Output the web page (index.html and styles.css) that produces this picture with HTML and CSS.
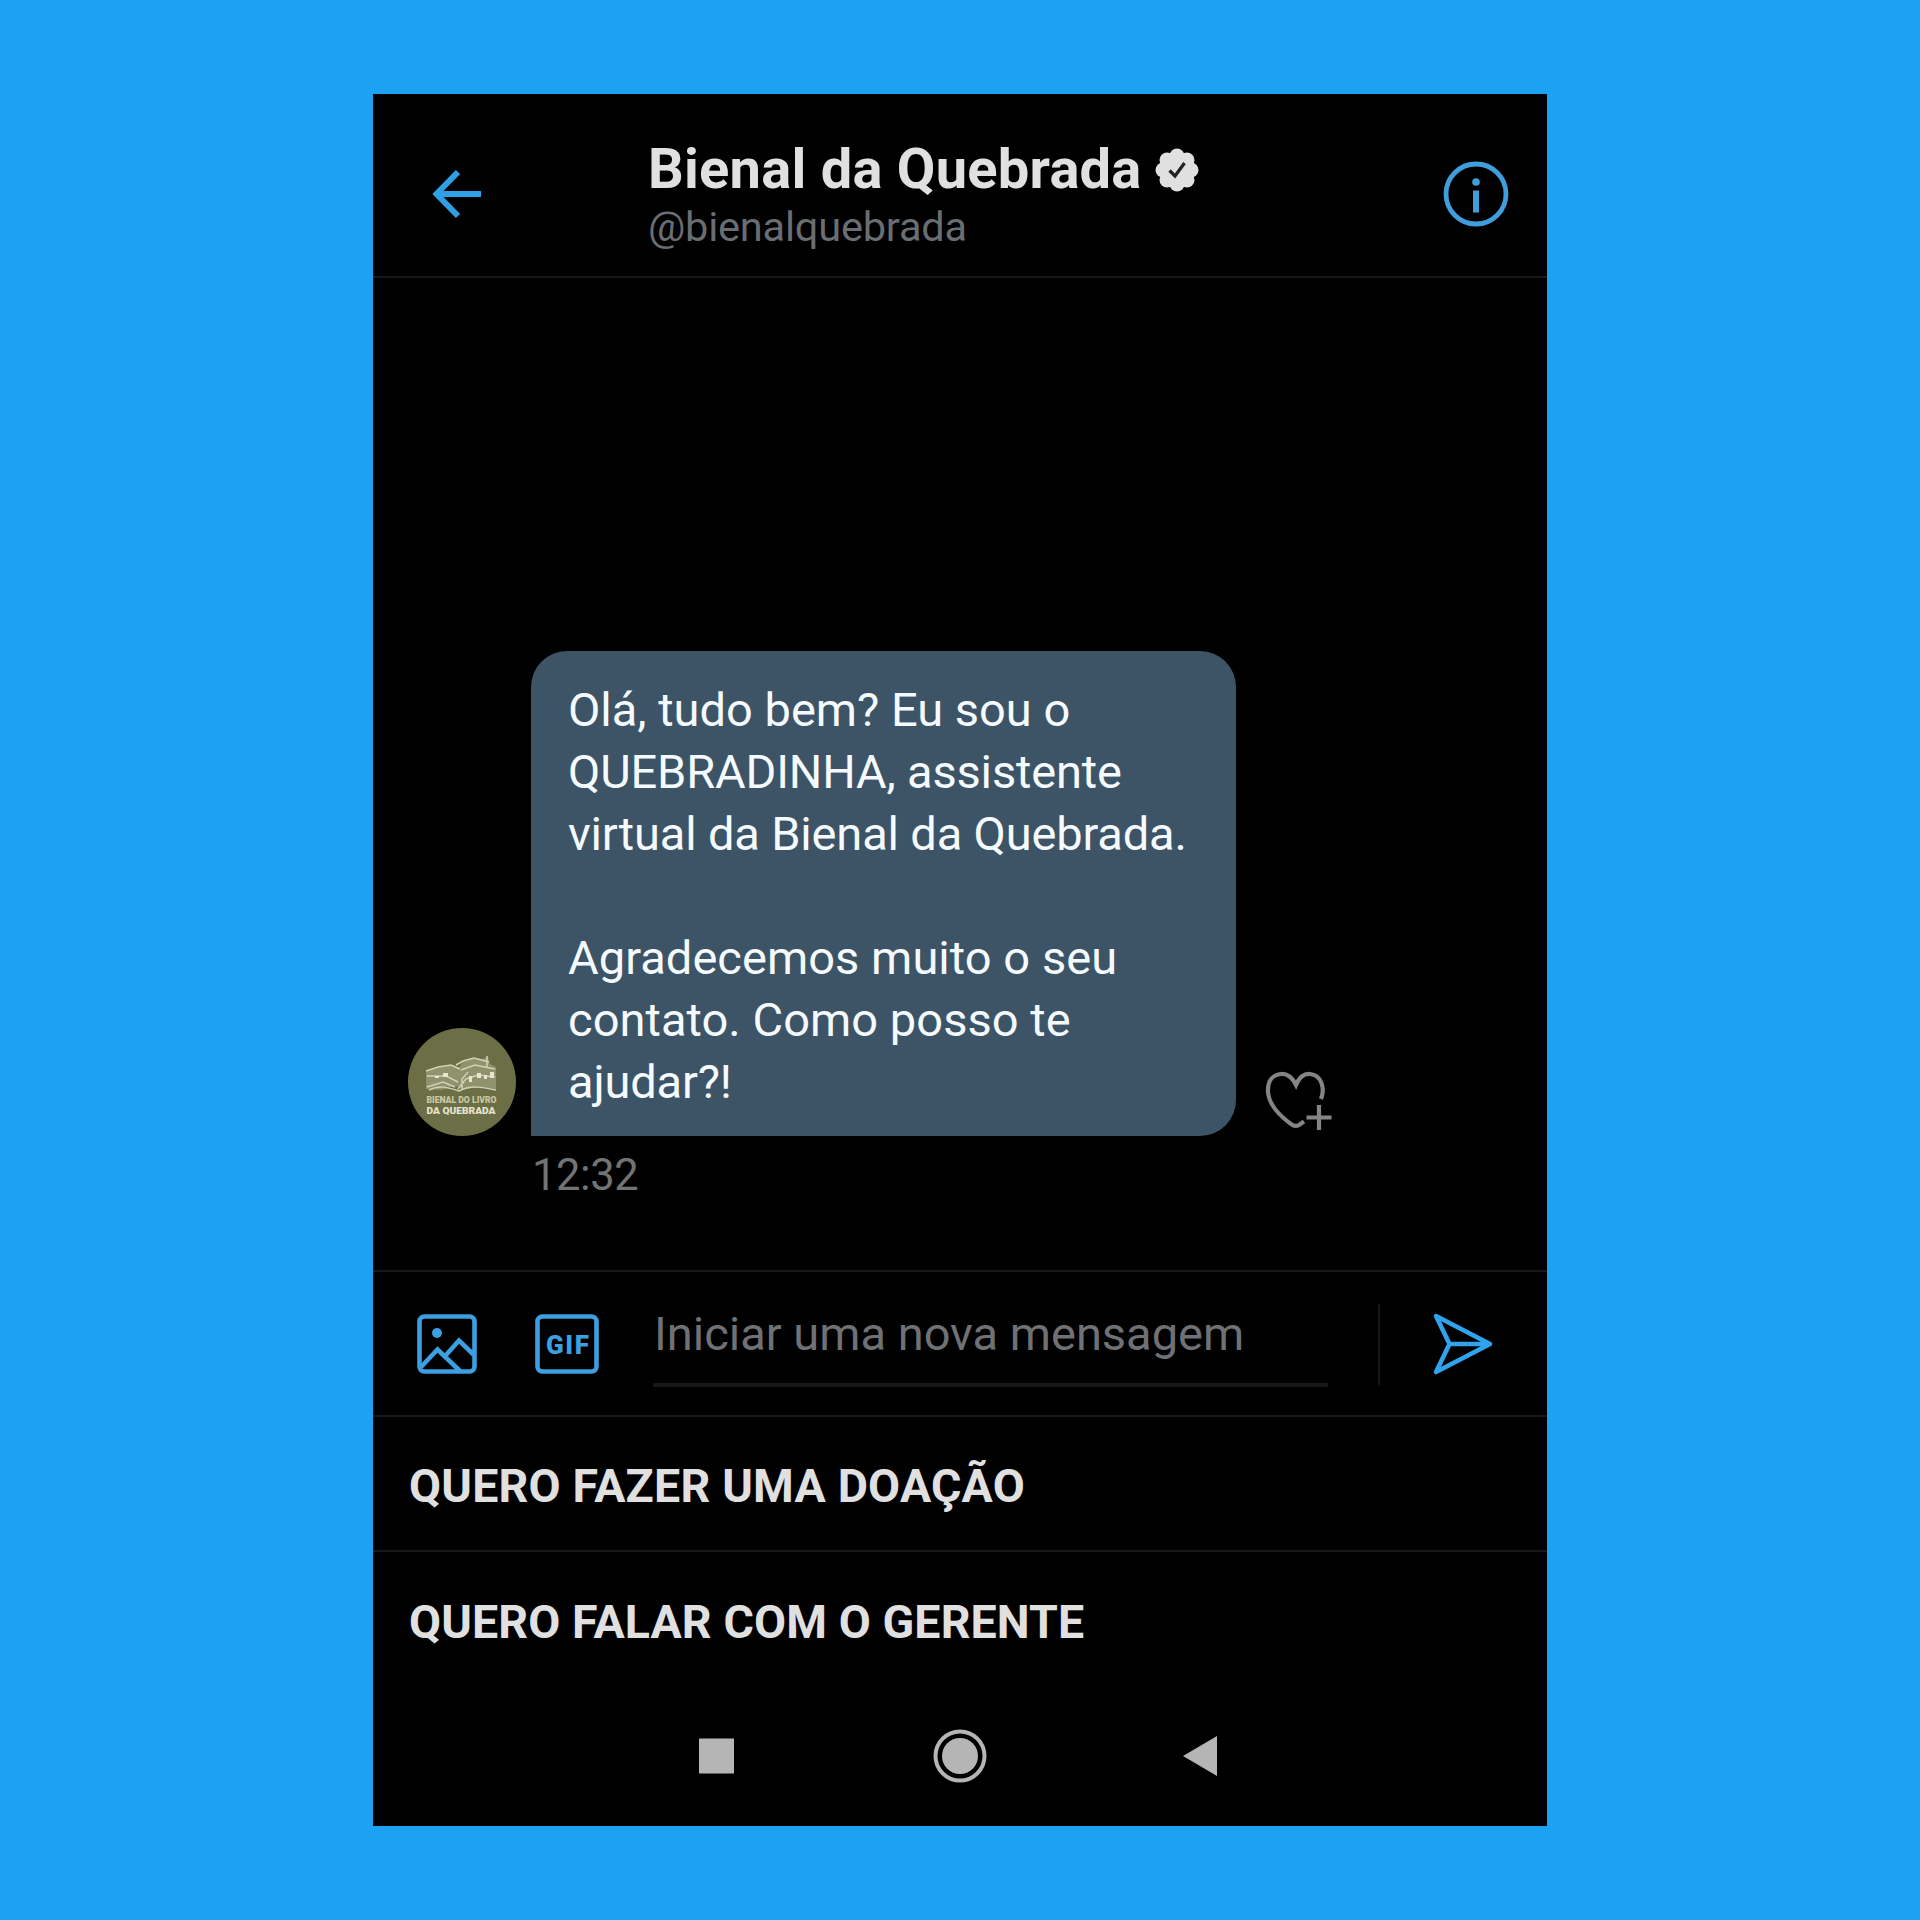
FILE: index.html
```html
<!DOCTYPE html>
<html lang="pt-BR">
<head>
<meta charset="utf-8">
<title>Bienal da Quebrada</title>
<link rel="stylesheet" href="styles.css">
</head>
<body>
<main class="phone">
  <header class="header">
    <svg class="back" viewBox="0 0 50 50" fill="none" stroke="currentColor" stroke-width="6"><path d="M26 3 4.500 25 26 47M4.500 25H49"/></svg>
    <div class="identity">
      <div class="name-row">
        <h1 class="name">Bienal da Quebrada</h1>
        <svg class="badge" viewBox="0 0 44 44"><g fill="currentColor"><circle cx="22" cy="22" r="18"/><circle cx="22" cy="8" r="7.500"/><circle cx="32" cy="12" r="7.500"/><circle cx="36" cy="22" r="7.500"/><circle cx="32" cy="32" r="7.500"/><circle cx="22" cy="36" r="7.500"/><circle cx="12" cy="32" r="7.500"/><circle cx="8" cy="22" r="7.500"/><circle cx="12" cy="12" r="7.500"/></g><path d="m14.500 22.500 5.500 5.500 9.500-13" fill="none" stroke="#222" stroke-width="3.200"/></svg>
      </div>
      <p class="handle">@bienalquebrada</p>
    </div>
    <svg class="info" viewBox="0 0 66 66" fill="none" stroke="currentColor"><circle cx="33" cy="33" r="30" stroke-width="4.800"/><path d="M33 29.500v22" stroke-width="6"/><circle cx="33" cy="21" r="3.800" fill="currentColor" stroke="none"/></svg>
  </header>

  <section class="thread">
    <div class="message">
      <svg class="avatar" viewBox="0 0 108 108">
        <circle cx="54" cy="54" r="54" fill="#6c6f45"/>
        <path d="M18 43 30 39l13-2 8 3 4-7 11-3 8 1 6-2 2 7 6 3v22l-17-2-13 2-12-3-12 4-16-1z" fill="#a5a582" opacity=".65"/>
        <g fill="none" stroke="#d2d0b5" stroke-width="1.500">
          <path d="M18 43l12-4 13-2 9 4M48 37l7-4 11-3 15 4M19 48h19l12 6M53 42l14-5 20 4M19 59l16-5 12 5M50 61l8-10 12-4 17 2M21 62c10-5 18-3 30 1 11-6 23-4 37-1M79 28v12M54 62V51l6-7"/>
        </g>
        <path d="M35 45h5v4h-5zM61 48h3v6h-3zM69 45h4v5h-4zM76 47h3v4h-3zM82 44h4v6h-4zM27 48h4v2h-4z" fill="#e8e6cf"/>
        <text x="18.500" y="75" textLength="70" lengthAdjust="spacingAndGlyphs" class="logo-text logo-top">BIENAL DO LIVRO</text>
        <text x="18.500" y="85.500" textLength="69" lengthAdjust="spacingAndGlyphs" class="logo-text">DA QUEBRADA</text>
      </svg>
      <div class="bubble">
        <p class="line">Olá, tudo bem? Eu sou o</p>
        <p class="line tight">QUEBRADINHA, assistente</p>
        <p class="line tight">virtual da Bienal da Quebrada.</p>
        <p class="line"></p>
        <p class="line loose">Agradecemos muito o seu</p>
        <p class="line loose">contato. Como posso te</p>
        <p class="line tight">ajudar?!</p>
      </div>
      <svg class="react" viewBox="0 0 68 62" fill="none" stroke="currentColor" stroke-width="4.200"><path d="M57 29C61 19 58 5 46 4 39 3.500 34.500 9 32 15 29 9 24 3.500 17 4 7 5 3.500 13 4 22c1 13 12 24 23 32 3 2.500 5.500 2.500 8 1l5-3.500"/><path d="M42.500 47.500h25M55 35v25"/></svg>
    </div>
    <time class="time">12:32</time>
  </section>

  <section class="composer">
    <svg class="photo" viewBox="0 0 60 60" fill="none" stroke="currentColor" stroke-width="4.600"><rect x="2.500" y="2.500" width="55" height="55" rx="5"/><path d="M4 53 20.500 35.500 43 57M29 41l13-14.500L57 41"/><circle cx="20" cy="19" r="5" fill="currentColor" stroke="none"/></svg>
    <svg class="gif" viewBox="0 0 64 60"><rect x="2.500" y="2.500" width="59" height="55" rx="5" fill="none" stroke="currentColor" stroke-width="4.600"/><text x="11" y="39.500" textLength="43" lengthAdjust="spacing" class="gif-text">GIF</text></svg>
    <div class="field"><span class="placeholder">Iniciar uma nova mensagem</span></div>
    <div class="divider"></div>
    <svg class="send" viewBox="0 0 62 64" fill="none" stroke="currentColor" stroke-width="4.600" stroke-linejoin="round"><path d="M4 4 58 32 4 60 17.500 32zM17.500 32H58"/></svg>
  </section>

  <button class="reply r1"><span>QUERO FAZER UMA DOAÇÃO</span></button>
  <button class="reply r2"><span>QUERO FALAR COM O GERENTE</span></button>

  <nav class="nav">
    <svg viewBox="0 0 520 60" fill="currentColor"><rect x="0" y="12.500" width="35" height="35"/><circle cx="261" cy="30" r="18"/><circle cx="261" cy="30" r="24.500" fill="none" stroke="currentColor" stroke-width="4"/><path d="M484 30 518 10v40z"/></svg>
  </nav>
</main>
</body>
</html>
```
FILE: styles.css
```css
* { box-sizing: border-box; }
body {
  margin: 0;
  height: 1920px;
  padding: 94px 373px;
  background: #1da1f2;
  font-family: Roboto, sans-serif;
  overflow: hidden;
}
h1, p { margin: 0; font-size: inherit; }
svg { display: block; flex: none; overflow: visible; }
.phone {
  width: 1174px;
  height: 1732px;
  display: flex;
  flex-direction: column;
  background: #000;
  color: #e0e0e0;
}
.header {
  height: 184px;
  display: flex;
  align-items: flex-start;
  padding: 45px 38px 0 59px;
  border-bottom: 2px solid #171717;
}
.back { width: 50px; height: 50px; margin-top: 30px; color: #2f9fe6; }
.identity { width: 650px; margin-left: 166px; white-space: nowrap; }
.name-row { display: flex; height: 60px; }
.name { width: 492px; font-size: 56px; line-height: 60px; font-weight: 700; letter-spacing: .25px; }
.badge { width: 44px; height: 44px; margin: 9px 0 0 15px; }
.handle { margin-top: 4px; font-size: 41.500px; line-height: 48px; letter-spacing: -.2px; color: #6a6d71; }
.info { width: 66px; height: 66px; margin: 22px 0 0 auto; color: #3f9fdc; }

.thread { height: 992px; padding: 373px 0 0 35px; }
.message { display: flex; align-items: flex-end; height: 485px; }
.avatar { width: 108px; height: 108px; }
.logo-text { font: 900 9px Roboto, sans-serif; fill: #e6e4ce; }
.logo-top { fill: #c9c8a8; }
.bubble {
  width: 705px;
  height: 485px;
  margin-left: 15px;
  padding: 28px 36px 23px 37px;
  border-radius: 36px 36px 36px 0;
  background: #3d5466;
  color: #f5faff;
}
.line { height: 62px; font-size: 47px; line-height: 62px; white-space: nowrap; }
.tight { letter-spacing: -.16px; }
.loose { letter-spacing: .05px; }
.react { width: 68px; height: 62px; margin: 0 0 4px 28px; color: #858585; }
.time { display: block; margin: 14px 0 0 124px; font-size: 43.500px; line-height: 52px; letter-spacing: -.4px; color: #737373; }

.composer {
  height: 147px;
  display: flex;
  border-top: 2px solid #171717;
  border-bottom: 2px solid #171717;
  color: #3b9fe2;
}
.photo { width: 60px; height: 60px; margin: 42px 0 0 44px; }
.gif { width: 64px; height: 60px; margin: 42px 0 0 58px; }
.gif-text { font: 900 26px Roboto, sans-serif; fill: currentColor; }
.field {
  width: 675px;
  height: 115px;
  margin-left: 54px;
  padding: 32px 0 0 1px;
  border-bottom: 4px solid #171717;
  font-size: 47px;
  line-height: 60px;
  color: #6f7174;
  white-space: nowrap;
}
.divider { width: 2px; height: 81px; margin: 32px 0 0 50px; background: #171717; }
.send { width: 62px; height: 64px; margin: 40px 0 0 52px; color: #2fa3ee; }

.reply {
  height: 135px;
  padding: 4px 0 0 36px;
  border: 0;
  background: none;
  color: inherit;
  font: 700 46.500px/60px Roboto, sans-serif;
  text-align: left;
  white-space: nowrap;
}
.r1 { border-bottom: 2px solid #171717; letter-spacing: .22px; }
.r2 { letter-spacing: .12px; }
.nav { display: flex; padding: 39px 0 0 326px; color: #b5b5b5; }
.nav svg { width: 520px; height: 60px; }
```
